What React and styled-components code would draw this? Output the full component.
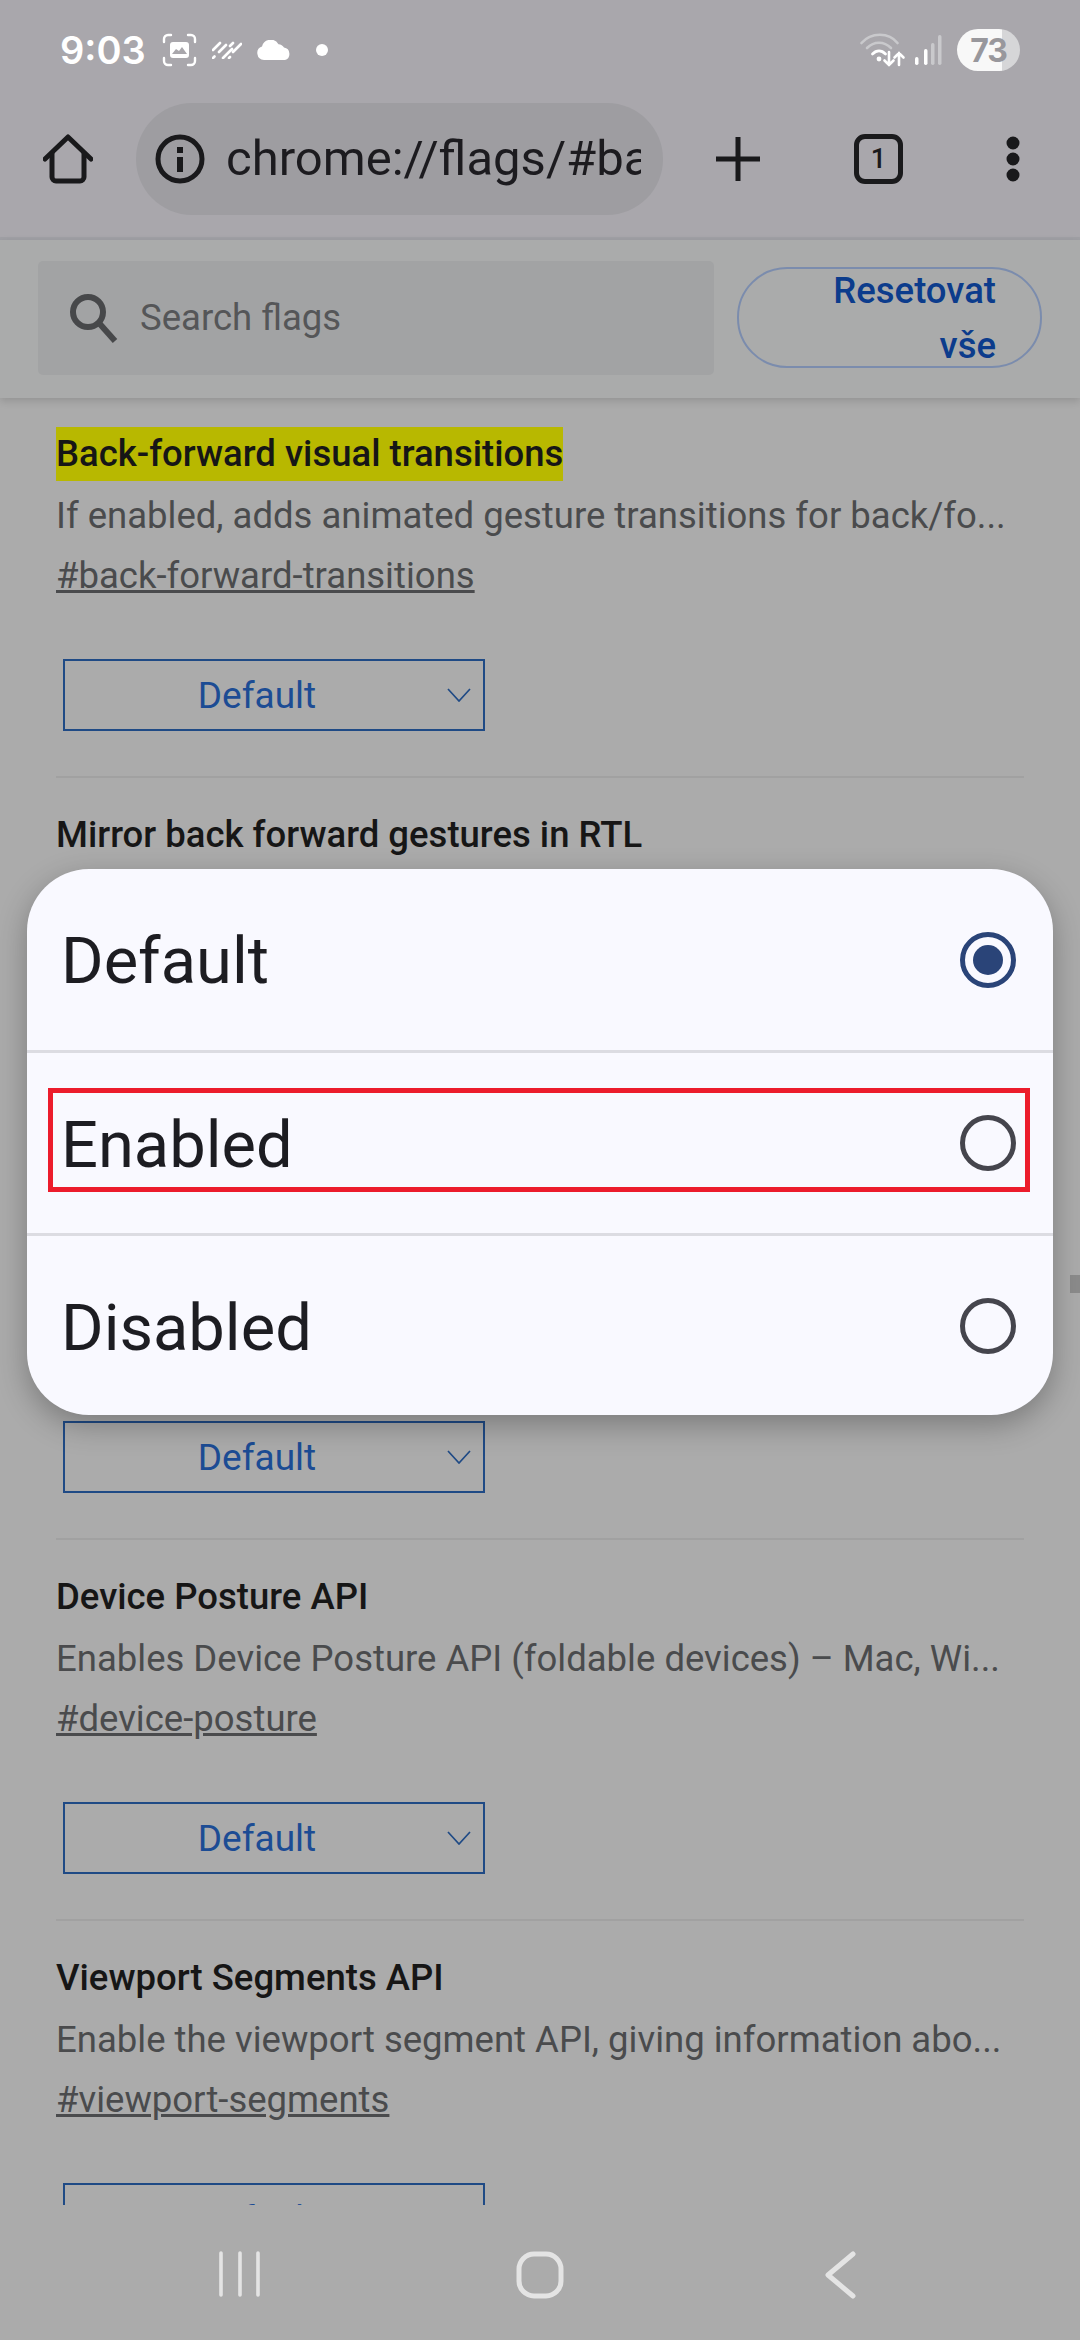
import React from 'react';
import styled, { createGlobalStyle } from 'styled-components';

const Global = createGlobalStyle`
  html, body { margin: 0; padding: 0; background: #ababab; }
  * { box-sizing: border-box; }
`;

const Screen = styled.div`
  position: relative;
  width: 1080px;
  height: 2340px;
  overflow: hidden;
  display: flex;
  flex-direction: column;
  background: #ababab;
  font-family: Roboto, "Liberation Sans", sans-serif;
`;

const Top = styled.header`
  height: 240px;
  flex: none;
  background: #a9a7ac;
  border-bottom: 3px solid #a0a0a5;
`;
const StatusBar = styled.div`
  height: 103px;
  display: flex;
  align-items: center;
  padding: 0 60px 3px;
  color: #fff;
`;
const Time = styled.span`
  font-family: Inter, Roboto, sans-serif;
  font-size: 38px;
  font-weight: 600;
  width: 102px;
  flex: none;
`;
const StatusIcon = styled.svg`
  flex: none;
  display: block;
  margin-right: ${p => p.$gap || 0}px;
`;
const Spacer = styled.div`
  flex: 1;
`;
const Battery = styled.div`
  width: 63px;
  height: 42px;
  border-radius: 21px;
  margin-left: 15px;
  background: linear-gradient(90deg, #f8f8f8 71%, #d6d6d8 71%);
  color: #98979c;
  font-family: Inter, Roboto, sans-serif;
  font-size: 32px;
  font-weight: 700;
  display: flex;
  align-items: center;
  justify-content: center;
  letter-spacing: -1px;
`;

const Toolbar = styled.div`
  display: flex;
  align-items: center;
  height: 112px;
  padding-left: 43px;
`;
const Pill = styled.div`
  width: 527px;
  height: 112px;
  margin-left: 43px;
  border-radius: 56px;
  background: #9e9da1;
  display: flex;
  align-items: center;
  padding-left: 19px;
  flex: none;
`;
const UrlText = styled.span`
  width: 415px;
  margin-left: 21px;
  overflow: hidden;
  white-space: nowrap;
  font-size: 49px;
  line-height: 60px;
  color: #1c1b1f;
`;
const ToolIcon = styled.svg`
  display: block;
  flex: none;
  margin-left: ${p => p.$left || 0}px;
`;
const TabCount = styled.div`
  width: 49px;
  height: 50px;
  margin-left: 94px;
  border: 5px solid #1a1a1c;
  border-radius: 11px;
  display: flex;
  align-items: center;
  justify-content: center;
  font-size: 27px;
  font-weight: 500;
  color: #1a1a1c;
  flex: none;
`;

const SearchHeader = styled.div`
  height: 158px;
  flex: none;
  position: relative;
  z-index: 1;
  background: #aaabab;
  box-shadow: 0 3px 8px rgba(0, 0, 0, 0.14);
  display: flex;
  align-items: flex-start;
  padding: 21px 38px 0;
`;
const SearchBox = styled.div`
  width: 676px;
  height: 114px;
  border-radius: 5px;
  background: #a2a3a4;
  display: flex;
  align-items: center;
  padding-left: 30px;
  color: #555658;
  font-size: 36.500px;
  flex: none;
`;
const SearchLabel = styled.span`
  margin: 0 0 2px 22px;
`;
const ResetButton = styled.div`
  width: 305px;
  height: 101px;
  margin: 6px 0 0 23px;
  border: 2px solid #7b8cad;
  border-radius: 50px;
  padding-right: 44px;
  text-align: right;
  color: #0c3c8c;
  font-size: 36.500px;
  font-weight: 500;
  line-height: 55px;
  flex: none;
  display: flex;
  flex-direction: column;
  justify-content: center;
`;

const Content = styled.main`
  height: 1807px;
  flex: none;
  overflow: hidden;
  padding: 0 56px;
`;
const Flag = styled.section`
  height: ${p => p.$first ? 380 : 381}px;
  padding-top: ${p => p.$first ? 29 : 30}px;
  border-bottom: 2px solid #a1a1a1;
`;
const Title = styled.div`
  height: 54px;
  font-size: 36.500px;
  font-weight: 500;
  line-height: 54px;
  color: #161616;
`;
const Mark = styled.span`
  display: inline-block;
  background: ${p => p.$on ? '#b8b800' : 'transparent'};
`;
const Desc = styled.div`
  margin-top: 8px;
  height: 54px;
  font-size: 36.500px;
  line-height: 54px;
  color: #4a4b4d;
  white-space: nowrap;
`;
const Hash = styled.div`
  margin-top: 6px;
  height: 54px;
  font-size: 36.500px;
  line-height: 54px;
  color: #4a4b4d;
  text-decoration: underline;
`;
const Select = styled.div`
  position: relative;
  width: 422px;
  height: 72px;
  margin: 56px 0 0 7px;
  border: 2px solid #1f4a85;
  display: flex;
  align-items: center;
  justify-content: center;
  padding-right: 34px;
  font-size: 37px;
  color: #1c4c94;
`;
const Chevron = styled.svg`
  position: absolute;
  right: 12px;
  top: 27px;
`;

const Dialog = styled.div`
  position: absolute;
  left: 27px;
  top: 869px;
  width: 1026px;
  height: 546px;
  border-radius: 62px;
  background: #f9f9ff;
  box-shadow: 0 10px 30px rgba(0, 0, 0, 0.28);
  overflow: hidden;
  z-index: 2;
`;
const Option = styled.div`
  position: relative;
  height: ${p => p.$first ? 181 : 183}px;
  border-top: ${p => p.$first ? 'none' : '3px solid #dcdce2'};
  display: flex;
  align-items: center;
  justify-content: space-between;
  padding: 0 37px 0 34px;
  font-size: 65px;
  color: #1d1d22;
`;
const OptionLabel = styled.span`
  margin-top: 3px;
`;
const Radio = styled.div`
  width: 56px;
  height: 56px;
  border-radius: 50%;
  border: 5px solid ${p => p.$on ? '#2a4478' : '#45454d'};
  display: flex;
  align-items: center;
  justify-content: center;
  &::after {
    content: '';
    display: ${p => p.$on ? 'block' : 'none'};
    width: 30px;
    height: 30px;
    border-radius: 50%;
    background: #2a4478;
  }
`;
const RedBox = styled.div`
  position: absolute;
  left: 21px;
  right: 23px;
  top: 35px;
  bottom: 41px;
  border: 5px solid #ec1c2c;
`;
const ScrollThumb = styled.div`
  position: absolute;
  right: 0;
  top: 1275px;
  width: 10px;
  height: 18px;
  background: #8b8b8b;
`;

const NavBar = styled.nav`
  flex: 1;
  display: grid;
  grid-template-columns: repeat(3, 1fr);
  padding: 0 90px;
  background: #ababab;
  justify-items: center;
  padding-top: 46px;
  align-items: start;
`;

const flags = [
  {
    title: 'Back-forward visual transitions',
    desc: 'If enabled, adds animated gesture transitions for back/fo...',
    hash: '#back-forward-transitions',
    on: true,
  },
  { title: 'Mirror back forward gestures in RTL', desc: '', hash: '' },
  { title: '', desc: '', hash: '' },
  {
    title: 'Device Posture API',
    desc: 'Enables Device Posture API (foldable devices) – Mac, Wi...',
    hash: '#device-posture',
  },
  {
    title: 'Viewport Segments API',
    desc: 'Enable the viewport segment API, giving information abo...',
    hash: '#viewport-segments',
  },
];

const options = ['Default', 'Enabled', 'Disabled'];

function App() {
  return (
    <Screen>
      <Global />
      <Top>
        <StatusBar>
          <Time>9:03</Time>
          <StatusIcon $gap={15} width="35" height="34" viewBox="0 0 35 34" fill="none">
            <path d="M2 9V6a4 4 0 0 1 4-4h3M26 2h3a4 4 0 0 1 4 4v3M33 25v3a4 4 0 0 1-4 4h-3M9 32H6a4 4 0 0 1-4-4v-3" stroke="#fff" strokeWidth="2.4" strokeLinecap="round" />
            <path d="M11 9h13a3 3 0 0 1 3 3v10a3 3 0 0 1-3 3H11a3 3 0 0 1-3-3V12a3 3 0 0 1 3-3z" fill="#fff" />
            <path d="M10 21l4-5 3 2 3-4 5 7z" fill="#a9a7ac" />
          </StatusIcon>
          <StatusIcon $gap={14} width="30" height="18" viewBox="0 0 30 18" fill="none" stroke="#fff" strokeWidth="2.6" strokeLinecap="round">
            <path d="M1 9l7-7M1 17l1.5-1.5M7 11l7-7M11 17l9-9M18 5l3-3M21 11l8-8M17 17l1-1" />
          </StatusIcon>
          <StatusIcon $gap={25} width="35" height="20" viewBox="0 0 35 20">
            <path d="M8 20a7 7 0 0 1-2-13.6 9 9 0 0 1 16.5-2.2A7 7 0 0 1 28 7.6 6.4 6.4 0 0 1 29 20z" fill="#fff" />
          </StatusIcon>
          <StatusIcon width="12" height="12" viewBox="0 0 12 12">
            <circle cx="6" cy="6" r="6" fill="#fff" />
          </StatusIcon>
          <Spacer />
          <StatusIcon $gap={9} width="46" height="34" viewBox="0 0 46 34" fill="none" strokeLinecap="round">
            <path d="M1.5 10C11-1 29-1 37.500 10" stroke="#c9c9cc" strokeWidth="2.6" />
            <path d="M7 15c7-7 17-7 24 0" stroke="#c9c9cc" strokeWidth="2.6" />
            <path d="M12.500 21c4-4 9-4 13 0" stroke="#fff" strokeWidth="2.8" />
            <circle cx="19" cy="26" r="2.400" fill="#fff" />
            <path d="M29 19v13M24.500 27.500l4.500 4.500 4.500-4.500" stroke="#fff" strokeWidth="2.6" />
            <path d="M39 32V20M34.500 24.500L39 20l4.500 4.500" stroke="#fff" strokeWidth="2.6" />
          </StatusIcon>
          <StatusIcon width="27" height="30" viewBox="0 0 27 30">
            <rect x="0" y="22" width="3.500" height="8" rx="1.700" fill="#fff" />
            <rect x="9" y="14" width="3.500" height="16" rx="1.700" fill="#fff" />
            <rect x="16" y="8" width="3.500" height="22" rx="1.700" fill="#c9c9cc" />
            <rect x="23" y="0" width="3.500" height="30" rx="1.700" fill="#c9c9cc" />
          </StatusIcon>
          <Battery>73</Battery>
        </StatusBar>
        <Toolbar>
          <ToolIcon width="50" height="50" viewBox="0 0 50 50" fill="none">
            <path d="M2 25L25 3l23 22" stroke="#19191b" strokeWidth="5" strokeLinecap="round" strokeLinejoin="round" />
            <path d="M9 18v25a4 4 0 0 0 4 4h24a4 4 0 0 0 4-4V18" stroke="#19191b" strokeWidth="5" />
          </ToolIcon>
          <Pill>
            <ToolIcon width="50" height="50" viewBox="0 0 50 50" fill="none">
              <circle cx="25" cy="25" r="22" stroke="#19191b" strokeWidth="5" />
              <rect x="22" y="23" width="6" height="15" fill="#19191b" />
              <rect x="22" y="13" width="6" height="6" fill="#19191b" />
            </ToolIcon>
            <UrlText>chrome://flags/#back</UrlText>
          </Pill>
          <ToolIcon $left={53} width="44" height="44" viewBox="0 0 44 44" fill="none">
            <path d="M22 0v44M0 22h44" stroke="#19191b" strokeWidth="5" strokeLinecap="round" />
          </ToolIcon>
          <TabCount>1</TabCount>
          <ToolIcon $left={103} width="14" height="46" viewBox="0 0 14 46">
            <circle cx="7" cy="7" r="6.500" fill="#19191b" />
            <circle cx="7" cy="23" r="6.500" fill="#19191b" />
            <circle cx="7" cy="39" r="6.500" fill="#19191b" />
          </ToolIcon>
        </Toolbar>
      </Top>
      <SearchHeader>
        <SearchBox>
          <svg width="50" height="50" viewBox="0 0 50 50" fill="none">
            <circle cx="20" cy="19" r="15" stroke="#47484a" strokeWidth="6" />
            <path d="M31 30l16 18" stroke="#47484a" strokeWidth="6" />
          </svg>
          <SearchLabel>Search flags</SearchLabel>
        </SearchBox>
        <ResetButton>
          <span>Resetovat</span>
          <span>vše</span>
        </ResetButton>
      </SearchHeader>
      <Content>
        {flags.map((flag, i) => (
          <Flag key={i} $first={i === 0}>
            <Title><Mark $on={flag.on}>{flag.title}</Mark></Title>
            <Desc>{flag.desc}</Desc>
            <Hash>{flag.hash}</Hash>
            <Select>
              Default
              <Chevron width="24" height="14" viewBox="0 0 24 14" fill="none">
                <path d="M1 1l11 12L23 1" stroke="#1f4a85" strokeWidth="1.7" />
              </Chevron>
            </Select>
          </Flag>
        ))}
      </Content>
      <NavBar>
        <svg width="44" height="46" viewBox="0 0 44 46" fill="none" stroke="#e4e4e4" strokeWidth="3.600" strokeLinecap="round">
          <path d="M3 2v42M22 2v42M40 2v42" />
        </svg>
        <svg width="48" height="48" viewBox="0 0 48 48" fill="none">
          <rect x="3" y="3" width="42" height="42" rx="15" stroke="#e4e4e4" strokeWidth="5" />
        </svg>
        <svg width="34" height="48" viewBox="0 0 34 48" fill="none">
          <path d="M30 3L5 24l25 21" stroke="#e4e4e4" strokeWidth="5" strokeLinecap="round" strokeLinejoin="round" />
        </svg>
      </NavBar>
      <ScrollThumb />
      <Dialog>
        {options.map((label, i) => (
          <Option key={label} $first={i === 0}>
            <OptionLabel>{label}</OptionLabel>
            <Radio $on={i === 0} />
            {i === 1 && <RedBox />}
          </Option>
        ))}
      </Dialog>
    </Screen>
  );
}

export default App;
